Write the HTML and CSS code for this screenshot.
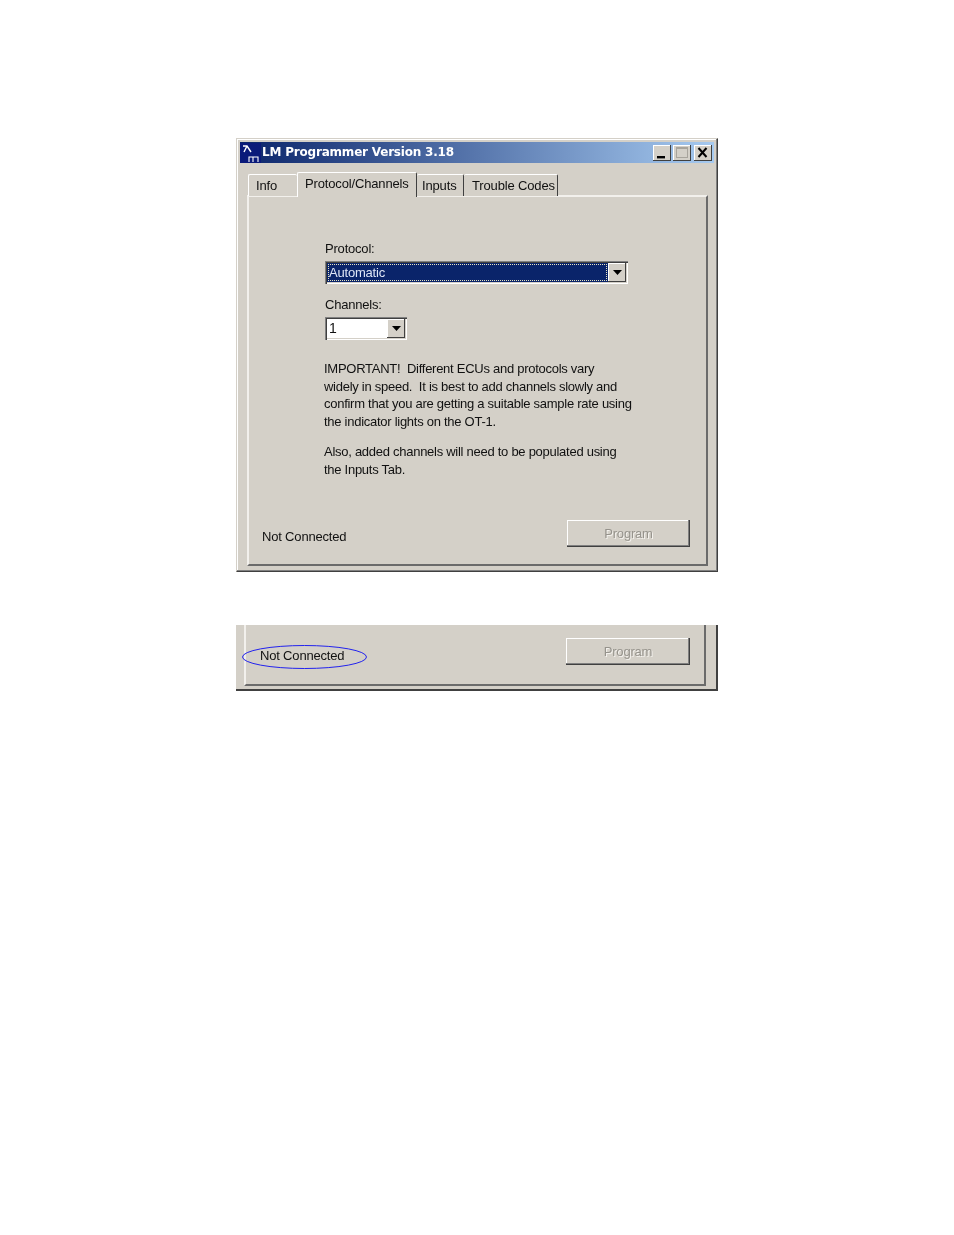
FILE: index.html
```html
<!DOCTYPE html>
<html lang="en">
<head>
<meta charset="utf-8">
<title>LM Programmer</title>
<link rel="stylesheet" href="styles.css">
</head>
<body>
<div class="page">
  <section class="window">
    <header class="titlebar">
      <svg class="app-icon" width="21" height="20" viewBox="0 0 21 20">
        <rect width="21" height="20" fill="#0a1a7a"/>
        <path d="M3 3h4l4 6M7 3l-3 6" fill="none" stroke="#fff" stroke-width="1.4"/>
        <path d="M9 19v-5h4v5M13 14h5v5" fill="none" stroke="#fff" stroke-width="1.1"/>
      </svg>
      <span class="title">LM Programmer Version 3.18</span>
      <div class="controls">
        <span class="ctl"><svg width="16" height="14" viewBox="0 0 16 14"><rect x="3" y="10" width="8" height="2.4" fill="#000"/></svg></span>
        <span class="ctl"><svg width="16" height="14" viewBox="0 0 16 14"><rect x="2.5" y="1.5" width="11" height="10" fill="none" stroke="#a8a49c" stroke-width="1"/><rect x="2" y="1" width="12" height="2" fill="#a8a49c"/></svg></span>
        <span class="ctl ctl-close"><svg width="16" height="14" viewBox="0 0 16 14"><path d="M3.5 2l8 9M11.5 2l-8 9" stroke="#000" stroke-width="2"/></svg></span>
      </div>
    </header>
    <nav class="tabs">
      <span class="tab tab-info">Info</span>
      <span class="tab tab-active">Protocol/Channels</span>
      <span class="tab tab-inputs">Inputs</span>
      <span class="tab tab-codes">Trouble Codes</span>
    </nav>
    <div class="panel">
      <div class="form">
        <label class="label">Protocol:</label>
        <div class="combo combo-wide">
          <span class="combo-value selected"><span class="focus">Automatic</span></span>
          <span class="combo-btn"><svg width="9" height="5" viewBox="0 0 9 5"><path d="M0 0h9L4.500 5z" fill="#000"/></svg></span>
        </div>
        <label class="label label-channels">Channels:</label>
        <div class="combo combo-narrow">
          <span class="combo-value combo-plain">1</span>
          <span class="combo-btn"><svg width="9" height="5" viewBox="0 0 9 5"><path d="M0 0h9L4.500 5z" fill="#000"/></svg></span>
        </div>
        <p class="note">IMPORTANT!&nbsp; Different ECUs and protocols vary<br>widely in speed.&nbsp; It is best to add channels slowly and<br>confirm that you are getting a suitable sample rate using<br>the indicator lights on the OT-1.</p>
        <p class="note note-second">Also, added channels will need to be populated using<br>the Inputs Tab.</p>
      </div>
      <div class="footer">
        <span class="status">Not Connected</span>
        <button class="program" disabled>Program</button>
      </div>
    </div>
  </section>

  <section class="crop">
    <div class="crop-panel">
      <div class="footer footer-crop">
        <span class="status status-circled">Not Connected
          <svg class="ellipse" width="127" height="26" viewBox="0 0 127 26"><ellipse cx="63.500" cy="13" rx="62" ry="11.500" fill="none" stroke="#2222ee" stroke-width="1"/></svg>
        </span>
        <button class="program" disabled>Program</button>
      </div>
    </div>
  </section>
</div>
</body>
</html>
```
FILE: styles.css
```css
* { box-sizing: border-box; }
html, body { margin: 0; padding: 0; background: #fff; }
body { font-family: "Liberation Sans", Arial, sans-serif; font-size: 13px; color: #111; }
.page { width: 954px; height: 1235px; padding: 138px 0 0 236px; overflow: hidden; }

.window {
  width: 482px; height: 434px; background: #d4d0c8; padding: 3px;
  border: 1px solid; border-color: #d4d0c8 #404040 #404040 #d4d0c8;
  box-shadow: inset -1px -1px 0 #808080, inset 1px 1px 0 #fff;
  filter: blur(.35px);
}
.titlebar {
  height: 21px; display: flex; align-items: center;
  background: linear-gradient(90deg, #0a246a 0%, #a6caf0 100%);
  color: #fff; padding-right: 2px;
}
.app-icon { flex: none; margin-right: 1px; }
.title { font: bold 12px/20px "DejaVu Sans", sans-serif; white-space: nowrap; letter-spacing: -.2px; margin-bottom: 1px; }
.controls { margin-left: auto; display: flex; gap: 2px; }
.ctl {
  width: 18px; height: 16px; background: #d4d0c8; display: flex; align-items: center; justify-content: center;
  box-shadow: inset -1px -1px 0 #404040, inset 1px 1px 0 #fff;
}
.ctl-close { margin-left: 1px; }

.tabs { display: flex; align-items: flex-end; height: 33px; padding-left: 8px; position: relative; z-index: 1; margin-bottom: -1px; }
.tab {
  height: 22px; line-height: 21px; padding: 0 7px; background: #d4d0c8;
  border-top: 1px solid #fff; border-right: 1px solid #404040; border-left: 1px solid #fff; border-radius: 2px 2px 0 0;
  white-space: nowrap; letter-spacing: -.15px;
}
.tab-info { width: 49px; border-right: 0; }
.tab-active { width: 120px; height: 25px; line-height: 22px; padding-left: 7px; margin-bottom: -1px; }
.tab-inputs { width: 47px; padding-left: 5px; border-left: 0; }
.tab-codes { width: 94px; padding-left: 8px; border-left: 0; }

.panel {
  width: 461px; height: 371px; margin-left: 7px; display: flex; flex-direction: column; justify-content: space-between;
  border: 2px solid; border-color: #f2f0ec #6b6b6b #6b6b6b #f2f0ec;
}

.form { padding: 43px 0 0 76px; }
.label { display: block; height: 18px; line-height: 18px; letter-spacing: -.2px; }
.combo { display: flex; height: 23px; margin-top: 3px; padding: 2px; background: #d4d0c8;
  box-shadow: inset 1px 1px 0 #808080, inset 2px 2px 0 #404040, inset -1px -1px 0 #fff; }
.combo-wide { width: 303px; }
.combo-narrow { width: 82px; margin-top: 3px; }
.label-channels { margin-top: 12px; }
.combo-value { flex: 1; background: #fff; line-height: 18px; padding-left: 2px; }
.combo-plain { font-size: 14px; }
.selected { background: #0a246a; color: #dfe6f6; padding: 1px; }
.focus { display: block; height: 100%; line-height: 16px; padding-left: 0; border: 1px dotted #e8e4c0; letter-spacing: -.2px; }
.combo-btn { width: 18px; flex: none; display: flex; align-items: center; justify-content: center; background: #d4d0c8;
  box-shadow: inset -1px -1px 0 #404040, inset 1px 1px 0 #fff; }

.note { margin: 20px 0 0 -1px; line-height: 17.7px; letter-spacing: -.27px; white-space: nowrap; }
.note-second { margin-top: 12px; line-height: 18.500px; }

.footer { display: flex; justify-content: space-between; align-items: flex-end; padding: 0 16px 14px 13px; }
.status { letter-spacing: -.18px; line-height: 18px; margin-bottom: 4px; position: relative; }
.program {
  width: 123px; height: 27px; padding: 0 0 1px; margin: 0 0 3px; font: 13px "Liberation Sans", sans-serif; letter-spacing: -.2px;
  background: #d4d0c8; border: 0; color: #96938c; text-shadow: 1px 1px 0 #f4f2ee;
  box-shadow: inset -1px -1px 0 #404040, inset -2px -2px 0 #808080, inset 1px 1px 0 #fff;
}

.crop {
  width: 482px; height: 66px; margin-top: 53px; background: #d4d0c8; padding: 0 0 3px 0;
  border-bottom: 2px solid #404040; border-right: 2px solid #404040; filter: blur(.35px);
}
.crop-panel { width: 462px; height: 100%; margin-left: 8px; border: 2px solid; border-top: 0; border-color: #f2f0ec #6b6b6b #6b6b6b #f2f0ec; display: flex; flex-direction: column; justify-content: flex-end; }
.footer-crop { padding: 0 14px 16px 14px; }
.footer-crop .program { width: 124px; }
.status-circled { margin-bottom: 3px; }
.ellipse { position: absolute; left: -19px; top: -3px; }
```
